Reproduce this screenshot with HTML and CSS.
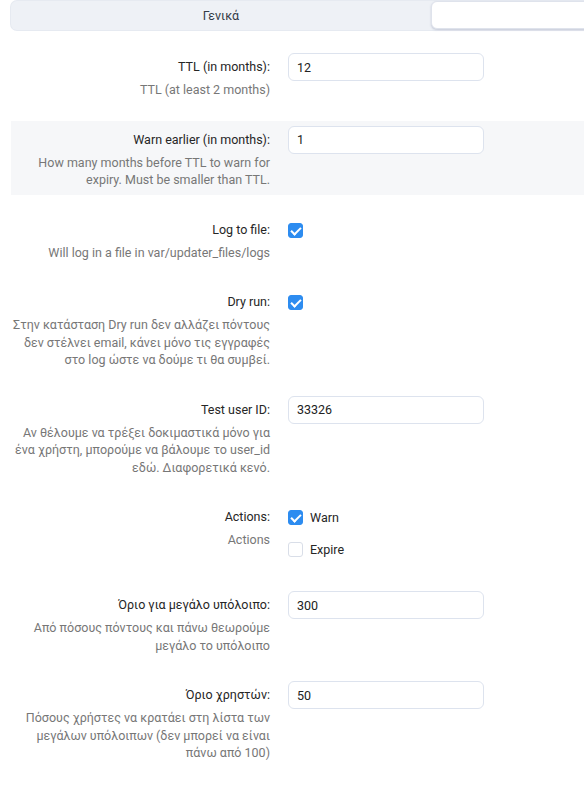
FILE: index.html
```html
<!DOCTYPE html>
<html lang="el">
<head>
<meta charset="utf-8">
<title>Ρυθμίσεις</title>
<link rel="stylesheet" href="styles.css">
</head>
<body>
<div class="page">
  <div class="tabs">
    <div class="tab">Γενικά</div>
    <div class="tab tab-active"></div>
  </div>

  <div class="form">
    <div class="row">
      <div class="meta">
        <label class="label">TTL (in months):</label>
        <div class="desc">TTL (at least 2 months)</div>
      </div>
      <div class="control"><input class="input" type="text" value="12"></div>
    </div>

    <div class="row row-shaded">
      <div class="meta">
        <label class="label">Warn earlier (in months):</label>
        <div class="desc">How many months before TTL to warn for expiry. Must be smaller than TTL.</div>
      </div>
      <div class="control"><input class="input" type="text" value="1"></div>
    </div>

    <div class="row">
      <div class="meta">
        <label class="label">Log to file:</label>
        <div class="desc">Will log in a file in var/updater_files/logs</div>
      </div>
      <div class="control">
        <div class="option"><span class="check checked"></span></div>
      </div>
    </div>

    <div class="row">
      <div class="meta">
        <label class="label">Dry run:</label>
        <div class="desc">Στην κατάσταση Dry run δεν αλλάζει πόντους δεν στέλνει email, κάνει μόνο τις εγγραφές στο log ώστε να δούμε τι θα συμβεί.</div>
      </div>
      <div class="control">
        <div class="option"><span class="check checked"></span></div>
      </div>
    </div>

    <div class="row">
      <div class="meta">
        <label class="label">Test user ID:</label>
        <div class="desc">Αν θέλουμε να τρέξει δοκιμαστικά μόνο για ένα χρήστη, μπορούμε να βάλουμε το user_id εδώ. Διαφορετικά κενό.</div>
      </div>
      <div class="control"><input class="input" type="text" value="33326"></div>
    </div>

    <div class="row">
      <div class="meta">
        <label class="label">Actions:</label>
        <div class="desc">Actions</div>
      </div>
      <div class="control options">
        <div class="option"><span class="check checked"></span><span class="option-text">Warn</span></div>
        <div class="option"><span class="check"></span><span class="option-text">Expire</span></div>
      </div>
    </div>

    <div class="row">
      <div class="meta">
        <label class="label">Όριο για μεγάλο υπόλοιπο:</label>
        <div class="desc">Από πόσους πόντους και πάνω θεωρούμε μεγάλο το υπόλοιπο</div>
      </div>
      <div class="control"><input class="input" type="text" value="300"></div>
    </div>

    <div class="row">
      <div class="meta">
        <label class="label">Όριο χρηστών:</label>
        <div class="desc">Πόσους χρήστες να κρατάει στη λίστα των μεγάλων υπόλοιπων (δεν μπορεί να είναι πάνω από 100)</div>
      </div>
      <div class="control"><input class="input" type="text" value="50"></div>
    </div>
  </div>
</div>
</body>
</html>
```

FILE: styles.css
```css
html, body {
  margin: 0;
  background: #ffffff;
}

body {
  overflow: hidden;
  font-family: Roboto, "Noto Sans", "Liberation Sans", sans-serif;
  font-size: 12.5px;
  color: #2b2b2b;
}

.page {
  width: 842px;
  padding: 1px 0 0 11px;
}

/* tab strip */
.tabs {
  display: flex;
  height: 29px;
  background: #eef1f6;
  border-radius: 6px;
  box-shadow: 0 0 0 1px #e6eaf1;
}

.tab {
  flex: 1;
  display: flex;
  align-items: center;
  justify-content: center;
  color: #333b47;
}

.tab-active {
  background: #ffffff;
  border: 1px solid #dfe3ec;
  border-radius: 6px;
  box-shadow: 0 1px 2px rgba(120, 130, 160, 0.35);
  margin: 0 0 1px 0;
}

/* settings form */
.form {
  margin-top: 18px;
}

.row {
  display: grid;
  grid-template-columns: 259px 196px;
  column-gap: 18px;
  padding: 5px 0 6px;
  margin-bottom: 16px;
}

.row-shaded {
  background: #f6f7f9;
}

.meta {
  display: flex;
  flex-direction: column;
  align-items: flex-end;
  text-align: right;
}

.label {
  line-height: 28px;
  color: #262626;
}

.desc {
  line-height: 17.5px;
  color: #777777;
}

.input {
  box-sizing: border-box;
  width: 196px;
  height: 28px;
  margin: 0;
  padding: 0 8px;
  border: 1px solid #dde3ee;
  border-radius: 6px;
  background: #ffffff;
  font-family: inherit;
  font-size: 12.5px;
  color: #222222;
  outline: none;
}

.options {
  display: flex;
  flex-direction: column;
  gap: 3px;
}

.option {
  display: flex;
  align-items: center;
  height: 29px;
}

.check {
  box-sizing: border-box;
  width: 15px;
  height: 15px;
  border: 1px solid #d9dee8;
  border-radius: 3px;
  background: #ffffff;
  position: relative;
}

.check.checked {
  background: #2d8cf0;
  border-color: #2d8cf0;
}

/* tick mark drawn with two borders */
.check.checked::after {
  content: "";
  position: absolute;
  left: 4px;
  top: 1px;
  width: 4px;
  height: 8px;
  border: solid #ffffff;
  border-width: 0 2px 2px 0;
  transform: rotate(45deg);
}

.option-text {
  margin-left: 7px;
  color: #262626;
}
```
